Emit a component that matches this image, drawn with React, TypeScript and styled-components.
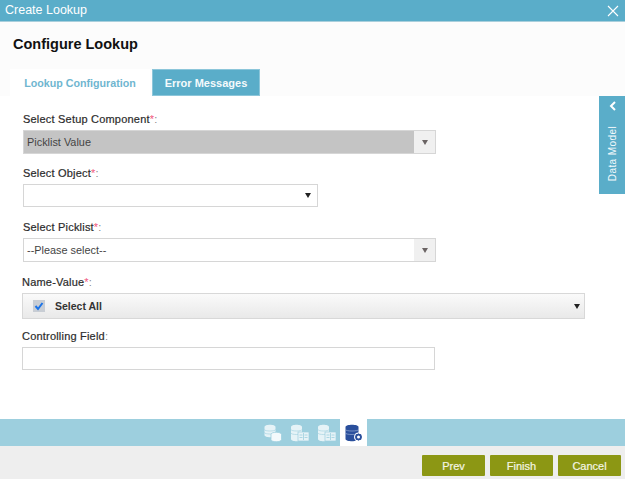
import React from 'react';
import styled, { createGlobalStyle } from 'styled-components';

const GlobalStyle = createGlobalStyle`
  html, body {
    margin: 0;
    padding: 0;
    background: #fff;
    font-family: "Liberation Sans", Arial, sans-serif;
  }
`;

const Dialog = styled.div`
  position: relative;
  width: 625px;
  height: 479px;
  overflow: hidden;
  display: flex;
  flex-direction: column;
  background: #fff;
`;

const TitleBar = styled.div`
  flex: 0 0 22px;
  box-sizing: border-box;
  height: 22px;
  background: #5aadc9;
  border-bottom: 1px solid #a9cfdc;
  display: flex;
  align-items: center;
  justify-content: space-between;
  padding: 0 6px 2px 5px;
  color: #fff;
  font-size: 12.5px;
`;

const CloseButton = styled.svg`
  width: 12px;
  height: 12px;
  stroke: #fff;
  stroke-width: 1.1;
  margin-top: 2px;
`;

const Head = styled.div`
  flex: 0 0 74px;
  box-sizing: border-box;
  background: #fcfcfc;
  display: flex;
  flex-direction: column;
  justify-content: space-between;
  padding: 14px 0 0 10px;
`;

const Heading = styled.h1`
  margin: 0 0 0 3px;
  font-size: 14.5px;
  line-height: 16px;
  font-weight: 700;
  color: #111;
`;

const Tabs = styled.div`
  display: flex;
  gap: 2px;
`;

const TabItem = styled.div<{ $active?: boolean }>`
  box-sizing: border-box;
  height: 27px;
  width: ${p => (p.$active ? '140px' : '108px')};
  display: flex;
  align-items: center;
  justify-content: center;
  font-size: ${p => (p.$active ? '10.7px' : '11px')};
  font-weight: 700;
  background: ${p => (p.$active ? '#fff' : '#5aadc9')};
  color: ${p => (p.$active ? '#6fb6d0' : '#f4fafc')};
  border: ${p => (p.$active ? 'none' : '1px solid #8cc6da')};
`;

const Form = styled.div`
  flex: 1;
  display: flex;
  flex-direction: column;
  padding: 17px 0 0 23px;
`;

const Field = styled.div<{ $gap?: number; $shift?: boolean }>`
  margin-bottom: ${p => p.$gap ?? 14}px;
  margin-left: ${p => (p.$shift ? '-1px' : '0')};
`;

const Label = styled.div`
  font-size: 11px;
  line-height: 13px;
  margin-bottom: 4px;
  color: #2b2b2b;
  letter-spacing: 0.2px;
  -webkit-text-stroke: 0.2px #2b2b2b;
`;

const Required = styled.span`
  color: #f0567c;
  -webkit-text-stroke: 0;
`;

const Colon = styled.span`
  color: #888;
  -webkit-text-stroke: 0;
`;

const SelectBox = styled.div<{ $width: number; $height?: number; $disabled?: boolean }>`
  box-sizing: border-box;
  width: ${p => p.$width}px;
  height: ${p => p.$height ?? 24}px;
  border: 1px solid #d6d6d6;
  background: ${p => (p.$disabled ? '#c4c4c4' : '#fff')};
  display: flex;
  align-items: center;
  justify-content: space-between;
  color: #444;
  font-size: 10.9px;
`;

const SelectText = styled.span`
  padding-left: 3px;
`;

const ArrowCell = styled.span`
  box-sizing: border-box;
  flex: 0 0 21px;
  height: 100%;
  background: #f0f0f0;
  display: flex;
  align-items: center;
  justify-content: center;
`;

const Caret = styled.span<{ $dark?: boolean }>`
  width: 0;
  height: 0;
  border-left: 3.5px solid transparent;
  border-right: 3.5px solid transparent;
  border-top: 5px solid ${p => (p.$dark ? '#222' : '#6b6464')};
`;

const PlainCaret = styled(Caret)`
  margin-right: 6px;
`;

const MultiBox = styled.div`
  box-sizing: border-box;
  width: 563px;
  height: 26px;
  border: 1px solid #d8d8d8;
  background: linear-gradient(#fafafa, #e9e9e9);
  display: flex;
  align-items: center;
  padding: 0 4px 0 10px;
  color: #333;
  font-size: 10.5px;
  font-weight: 700;
`;

const CheckIcon = styled.svg`
  width: 12px;
  height: 12px;
  margin-right: 10px;
`;

const MultiText = styled.span`
  flex: 1;
`;

const TextBox = styled.div`
  box-sizing: border-box;
  width: 413px;
  height: 23px;
  border: 1px solid #d6d6d6;
  background: #fff;
`;

const DataModelTab = styled.div`
  position: absolute;
  top: 96px;
  right: 0;
  box-sizing: border-box;
  width: 26px;
  height: 98px;
  padding-left: 2px;
  background: #5aadc9;
  color: #f4fafc;
  display: flex;
  flex-direction: column;
  align-items: center;
  font-size: 10px;
`;

const Chevron = styled.svg`
  width: 8px;
  height: 10px;
  margin: 5px 0 15px;
  stroke: #fff;
  stroke-width: 2;
  fill: none;
`;

const VerticalText = styled.span`
  writing-mode: vertical-rl;
  transform: rotate(180deg);
  line-height: 12px;
  letter-spacing: 0.4px;
`;

const StepBar = styled.div`
  flex: 0 0 27px;
  background: #9dcfde;
  display: flex;
  justify-content: center;
  padding-left: 1px;
`;

const Step = styled.div<{ $active?: boolean }>`
  width: 27px;
  height: 27px;
  display: flex;
  align-items: center;
  justify-content: center;
  background: ${p => (p.$active ? '#fff' : 'transparent')};
`;

const Footer = styled.div`
  flex: 0 0 33px;
  box-sizing: border-box;
  background: #eeeeee;
  display: flex;
  justify-content: flex-end;
  gap: 5px;
  padding: 9px 4px 0 0;
`;

const ActionButton = styled.button`
  box-sizing: border-box;
  width: 63px;
  height: 21px;
  border: none;
  border-radius: 1px;
  background: #8c9714;
  color: #f4f6e4;
  font-family: inherit;
  font-size: 11px;
  font-weight: 400;
  -webkit-text-stroke: 0.2px #f4f6e4;
  padding: 0;
`;

// db cylinder drawn at a given offset
const Cylinder = ({ x, y, w, h, fill, stroke }: { x: number; y: number; w: number; h: number; fill: string; stroke?: string }) => (
  <path
    d={`M${x} ${y + 2}c0-3 ${w}-3 ${w} 0v${h}c0 3-${w} 3-${w} 0z`}
    fill={fill}
    stroke={stroke}
    strokeWidth={stroke ? 0.8 : 0}
  />
);

const TwoDbIcon = () => (
  <svg width="18" height="18" viewBox="0 0 18 18">
    <Cylinder x={0.5} y={1} w={11} h={8} fill="#e6f3f7" />
    <path d="M.5 5.5c0 2 11 2 11 0M.5 8.5c0 2 11 2 11 0" stroke="#9dcfde" strokeWidth="0.6" fill="none" />
    <Cylinder x={7} y={8.5} w={10.5} h={5} fill="#f4fafc" stroke="#9dcfde" />
  </svg>
);

const DbTableIcon = () => (
  <svg width="18" height="18" viewBox="0 0 18 18">
    <Cylinder x={0} y={1} w={11} h={12} fill="#e6f3f7" />
    <path d="M0 5.5c0 2 11 2 11 0M0 9c0 2 11 2 11 0" stroke="#9dcfde" strokeWidth="0.6" fill="none" />
    <rect x="7" y="8" width="11" height="9" fill="#e6f3f7" stroke="#9dcfde" strokeWidth="0.7" />
    <path d="M12.5 9v7M8.5 11h3M13.5 11h3M8.5 13.5h3M13.5 13.5h3" stroke="#9dcfde" strokeWidth="0.8" />
  </svg>
);

const DbGearIcon = () => (
  <svg width="18" height="18" viewBox="0 0 18 18">
    <Cylinder x={0.5} y={1} w={13} h={12} fill="#2a4f9c" />
    <path d="M.5 5.5c0 2 13 2 13 0M.5 9c0 2 13 2 13 0" stroke="#a9bcdc" strokeWidth="0.6" fill="none" />
    <circle cx="13.5" cy="13" r="4.5" fill="#fff" />
    <circle cx="13.5" cy="13" r="2.4" fill="none" stroke="#2a4f9c" strokeWidth="1.8" />
    <path d="M13.5 9.5v1.4M13.5 15.1v1.4M10 13h1.4M15.6 13H17M11 10.5l1 1M15 14.5l1 1M16 10.5l-1 1M12 14.5l-1 1" stroke="#2a4f9c" strokeWidth="1.2" />
  </svg>
);

const FieldLabel = ({ text, required }: { text: string; required?: boolean }) => (
  <Label>
    {text}
    {required && <Required>*</Required>}
    <Colon>:</Colon>
  </Label>
);

export default function App() {
  return (
    <Dialog>
      <GlobalStyle />
      <TitleBar>
        <span>Create Lookup</span>
        <CloseButton viewBox="0 0 12 12">
          <path d="M1 1l10 10M11 1L1 11" />
        </CloseButton>
      </TitleBar>
      <Head>
        <Heading>Configure Lookup</Heading>
        <Tabs>
          <TabItem $active>Lookup Configuration</TabItem>
          <TabItem>Error Messages</TabItem>
        </Tabs>
      </Head>
      <Form>
        <Field $gap={13}>
          <FieldLabel text="Select Setup Component" required />
          <SelectBox $width={413} $disabled>
            <SelectText>Picklist Value</SelectText>
            <ArrowCell><Caret /></ArrowCell>
          </SelectBox>
        </Field>
        <Field $gap={14}>
          <FieldLabel text="Select Object" required />
          <SelectBox $width={295} $height={23}>
            <span />
            <PlainCaret $dark />
          </SelectBox>
        </Field>
        <Field>
          <FieldLabel text="Select Picklist" required />
          <SelectBox $width={413}>
            <SelectText>--Please select--</SelectText>
            <ArrowCell><Caret /></ArrowCell>
          </SelectBox>
        </Field>
        <Field $shift $gap={11}>
          <FieldLabel text="Name-Value" required />
          <MultiBox>
            <CheckIcon viewBox="0 0 12 12">
              <rect width="12" height="12" fill="#c8cdd4" />
              <path d="M2.5 6l2.5 3 4.5-6" stroke="#1a73e8" strokeWidth="2" fill="none" />
            </CheckIcon>
            <MultiText>Select All</MultiText>
            <Caret $dark />
          </MultiBox>
        </Field>
        <Field $shift>
          <FieldLabel text="Controlling Field" />
          <TextBox />
        </Field>
      </Form>
      <DataModelTab>
        <Chevron viewBox="0 0 8 10">
          <path d="M6 1L2 5l4 4" />
        </Chevron>
        <VerticalText>Data Model</VerticalText>
      </DataModelTab>
      <StepBar>
        <Step><TwoDbIcon /></Step>
        <Step><DbTableIcon /></Step>
        <Step><DbTableIcon /></Step>
        <Step $active><DbGearIcon /></Step>
      </StepBar>
      <Footer>
        <ActionButton>Prev</ActionButton>
        <ActionButton>Finish</ActionButton>
        <ActionButton>Cancel</ActionButton>
      </Footer>
    </Dialog>
  );
}
